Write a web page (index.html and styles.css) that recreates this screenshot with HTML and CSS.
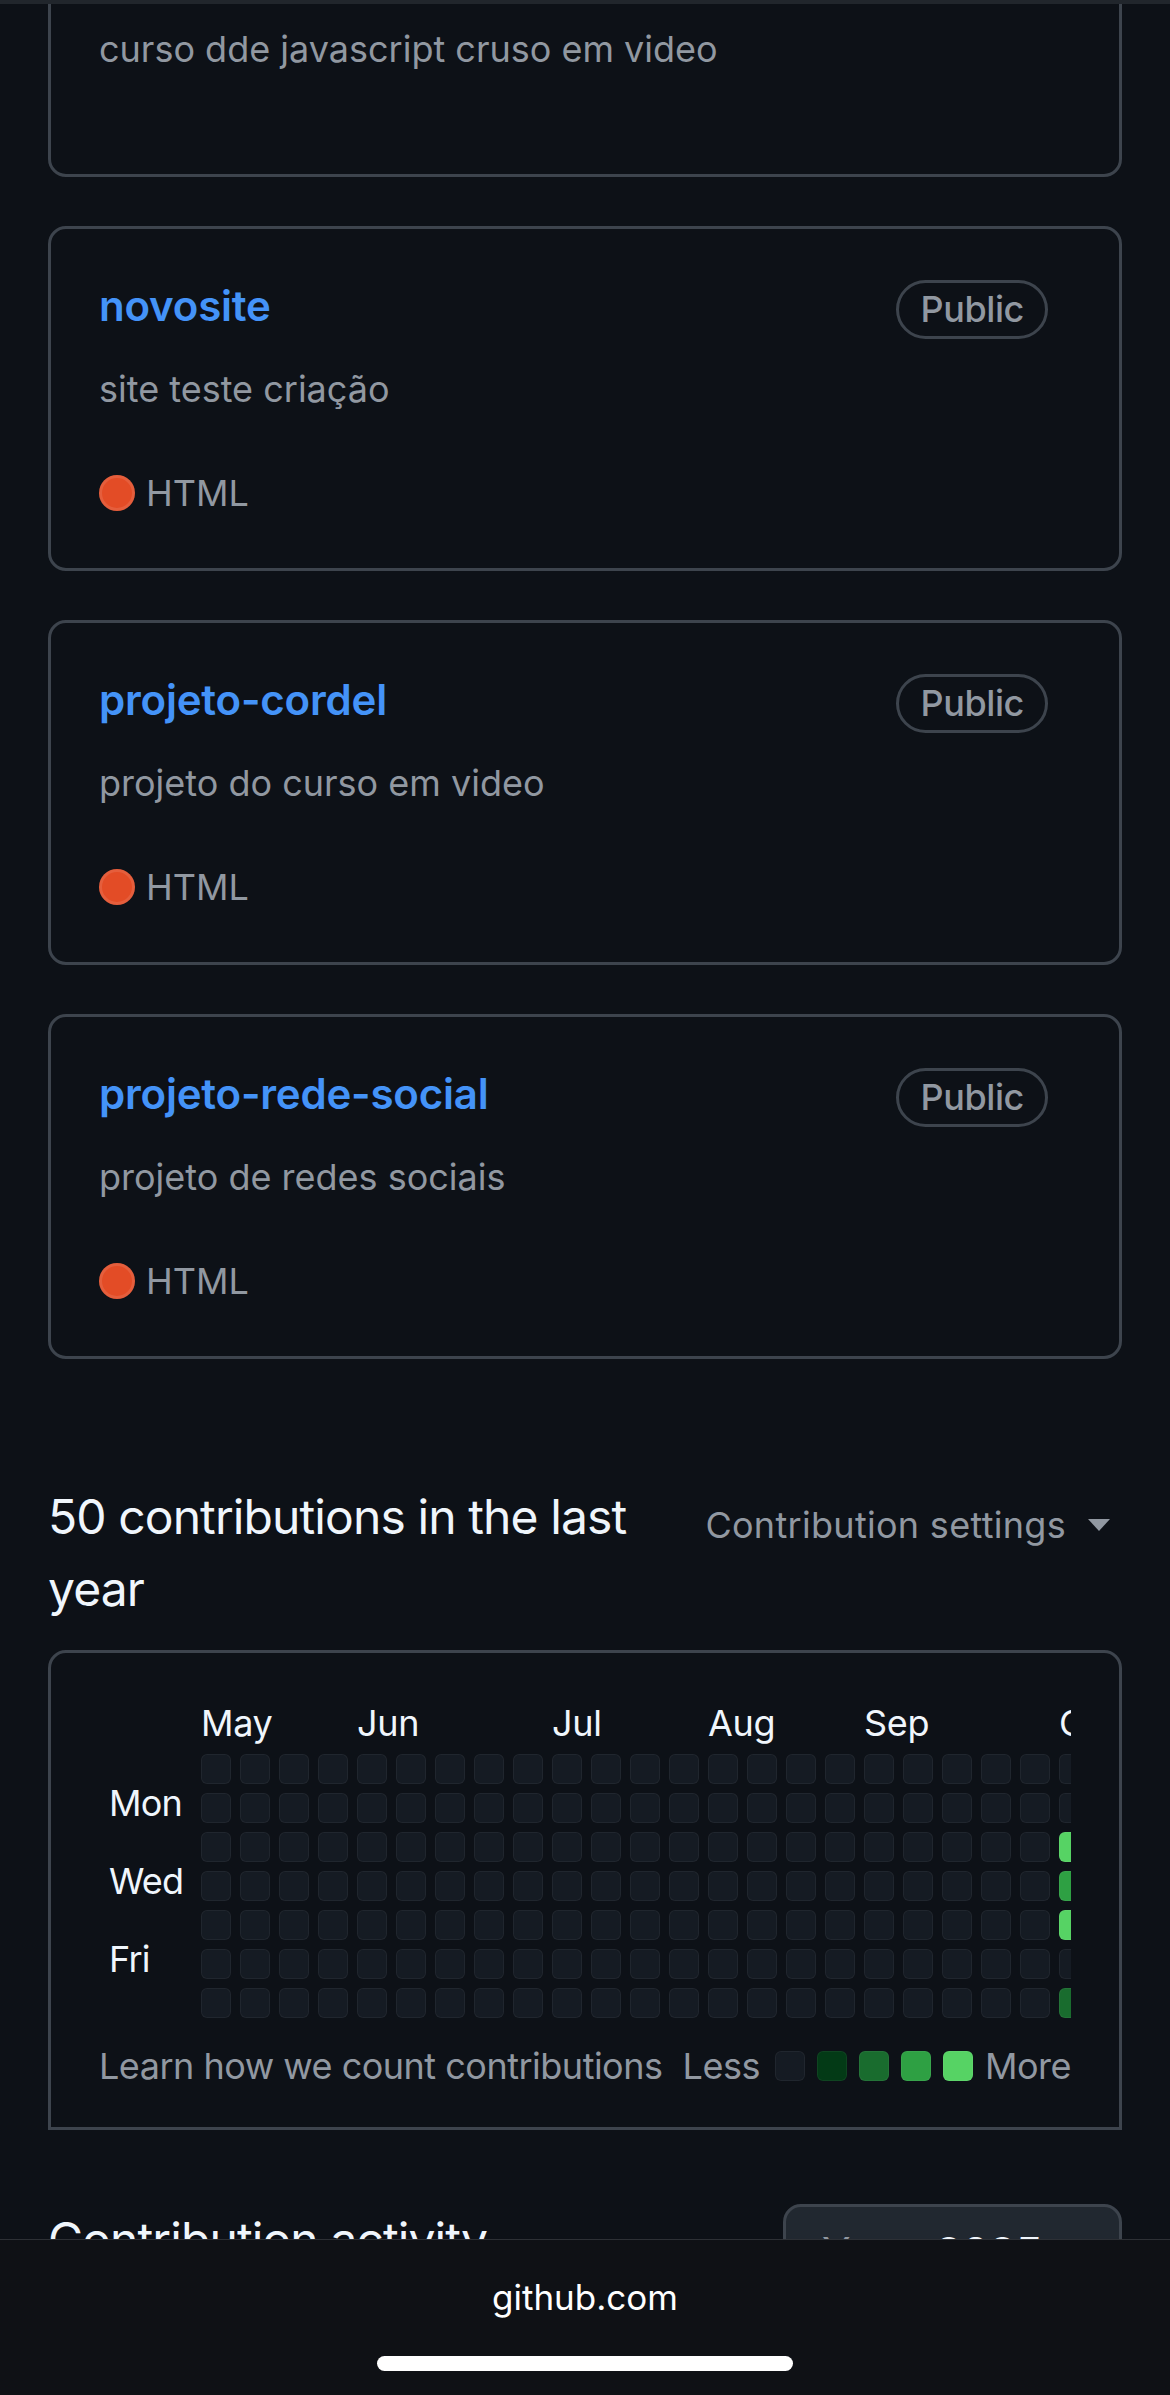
FILE: index.html
```html
<!DOCTYPE html>
<html lang="pt-BR">
<head>
<meta charset="utf-8">
<title>GitHub profile</title>
<link rel="stylesheet" href="styles.css">
</head>
<body>
<div class="chrome-top"></div>
<main class="page">
  <ol class="pinned">
    <li class="card">
      <div class="card-head"><a class="repo" href="#">curso-javascript</a><span class="label">Public</span></div>
      <p class="desc">curso dde javascript cruso em video</p>
    </li>
    <li class="card">
      <div class="card-head"><a class="repo" href="#">novosite</a><span class="label">Public</span></div>
      <p class="desc">site teste criação</p>
      <p class="lang"><span class="dot"></span>HTML</p>
    </li>
    <li class="card">
      <div class="card-head"><a class="repo" href="#">projeto-cordel</a><span class="label">Public</span></div>
      <p class="desc">projeto do curso em video</p>
      <p class="lang"><span class="dot"></span>HTML</p>
    </li>
    <li class="card">
      <div class="card-head"><a class="repo" href="#">projeto-rede-social</a><span class="label">Public</span></div>
      <p class="desc">projeto de redes sociais</p>
      <p class="lang"><span class="dot"></span>HTML</p>
    </li>
  </ol>

  <section class="contrib">
    <div class="contrib-head">
      <h2>50 contributions in the last year</h2>
      <div class="settings">Contribution settings<span class="caret"></span></div>
    </div>

    <div class="graph-box">
      <div class="graph-scroll">
        <div class="months">
          <span class="m0">May</span>
          <span class="m4">Jun</span>
          <span class="m9">Jul</span>
          <span class="m13">Aug</span>
          <span class="m17">Sep</span>
          <span class="m22">Oct</span>
        </div>
        <div class="cal-body">
          <div class="days">
            <span></span><span>Mon</span><span></span><span>Wed</span><span></span><span>Fri</span><span></span>
          </div>
          <div class="cells">
            <div class="week"><i></i><i></i><i></i><i></i><i></i><i></i><i></i></div>
            <div class="week"><i></i><i></i><i></i><i></i><i></i><i></i><i></i></div>
            <div class="week"><i></i><i></i><i></i><i></i><i></i><i></i><i></i></div>
            <div class="week"><i></i><i></i><i></i><i></i><i></i><i></i><i></i></div>
            <div class="week"><i></i><i></i><i></i><i></i><i></i><i></i><i></i></div>
            <div class="week"><i></i><i></i><i></i><i></i><i></i><i></i><i></i></div>
            <div class="week"><i></i><i></i><i></i><i></i><i></i><i></i><i></i></div>
            <div class="week"><i></i><i></i><i></i><i></i><i></i><i></i><i></i></div>
            <div class="week"><i></i><i></i><i></i><i></i><i></i><i></i><i></i></div>
            <div class="week"><i></i><i></i><i></i><i></i><i></i><i></i><i></i></div>
            <div class="week"><i></i><i></i><i></i><i></i><i></i><i></i><i></i></div>
            <div class="week"><i></i><i></i><i></i><i></i><i></i><i></i><i></i></div>
            <div class="week"><i></i><i></i><i></i><i></i><i></i><i></i><i></i></div>
            <div class="week"><i></i><i></i><i></i><i></i><i></i><i></i><i></i></div>
            <div class="week"><i></i><i></i><i></i><i></i><i></i><i></i><i></i></div>
            <div class="week"><i></i><i></i><i></i><i></i><i></i><i></i><i></i></div>
            <div class="week"><i></i><i></i><i></i><i></i><i></i><i></i><i></i></div>
            <div class="week"><i></i><i></i><i></i><i></i><i></i><i></i><i></i></div>
            <div class="week"><i></i><i></i><i></i><i></i><i></i><i></i><i></i></div>
            <div class="week"><i></i><i></i><i></i><i></i><i></i><i></i><i></i></div>
            <div class="week"><i></i><i></i><i></i><i></i><i></i><i></i><i></i></div>
            <div class="week"><i></i><i></i><i></i><i></i><i></i><i></i><i></i></div>
            <div class="week"><i></i><i></i><i class="l4"></i><i class="l3"></i><i class="l4"></i><i></i><i class="l2"></i></div>
          </div>
        </div>
      </div>
      <div class="legend">
        <span class="learn">Learn how we count contributions</span>
        <span class="scale">
          <span class="less">Less</span>
          <i></i><i class="l1"></i><i class="l2"></i><i class="l3"></i><i class="l4"></i>
          <span>More</span>
        </span>
      </div>
    </div>

    <div class="activity-head">
      <h2>Contribution activity</h2>
      <div class="year-btn"><span class="year-label">Year:</span><b>2025</b><span class="caret caret-light"></span></div>
    </div>
  </section>
</main>

<div class="safari-bar">
  <span class="url">github.com</span>
  <span class="home"></span>
</div>
</body>
</html>
```
FILE: styles.css
```css
* { box-sizing: border-box; }

html, body {
  margin: 0;
  background: #0d1117;
}

body {
  width: 1170px;
  height: 2395px;
  overflow: hidden;
  font-family: Inter, "Noto Sans", "Liberation Sans", sans-serif;
  color: #f0f6fc;
}

.chrome-top {
  position: fixed;
  top: 0;
  left: 0;
  right: 0;
  height: 4px;
  background: #21262c;
  z-index: 5;
}

.page {
  padding: 0 48px;
}

/* Pinned repositories */
.pinned {
  list-style: none;
  margin: -114px 0 0;
  padding: 0;
  display: flex;
  flex-direction: column;
  gap: 49px;
}

.card {
  border: 3px solid #3d444d;
  border-radius: 18px;
  padding: 48px;
}

.card-head {
  display: flex;
  align-items: flex-start;
  height: 63px;
}

.repo {
  flex: 1;
  font-size: 42px;
  line-height: 57px;
  font-weight: 600;
  color: #4493f8;
  text-decoration: none;
  letter-spacing: -0.2px;
}

.label {
  margin-top: 3px;
  margin-right: 23px;
  border: 3px solid #3d444d;
  border-radius: 999px;
  padding: 0 21px;
  font-size: 36px;
  line-height: 53px;
  font-weight: 500;
  color: #9198a1;
  letter-spacing: -0.4px;
}

.desc {
  margin: 22px 0 50px;
  font-size: 36px;
  line-height: 54px;
  color: #9198a1;
}

.lang {
  margin: 0;
  display: flex;
  align-items: center;
  gap: 11px;
  font-size: 36px;
  line-height: 54px;
  color: #9198a1;
}

.dot {
  width: 36px;
  height: 36px;
  border-radius: 50%;
  background: #e34c26;
  box-shadow: inset 0 0 0 3px rgba(255, 255, 255, 0.1);
}

/* Contributions */
.contrib {
  margin-top: 122px;
}

.contrib-head {
  display: flex;
  align-items: flex-start;
}

.contrib-head h2,
.activity-head h2 {
  margin: 0;
  font-size: 48px;
  line-height: 72px;
  font-weight: 400;
  color: #f0f6fc;
  letter-spacing: -0.9px;
}

.contrib-head h2 {
  flex: 1;
  padding-right: 40px;
}

.settings {
  margin-top: 17px;
  margin-right: 12px;
  display: flex;
  align-items: center;
  font-size: 36px;
  line-height: 54px;
  color: #9198a1;
  white-space: nowrap;
  letter-spacing: 0.3px;
}

.caret {
  width: 0;
  height: 0;
  margin-left: 22px;
  border-left: 11px solid transparent;
  border-right: 11px solid transparent;
  border-top: 12px solid #9198a1;
}

.graph-box {
  margin-top: 25px;
  border: 3px solid #3d444d;
  border-radius: 18px 18px 0 0;
  padding: 43px 48px 34px;
}

.graph-scroll {
  overflow: hidden;
}

.months {
  display: grid;
  grid-template-columns: repeat(23, 30px);
  column-gap: 9px;
  padding-left: 102px;
  height: 54px;
  margin-bottom: 4px;
  font-size: 36px;
  line-height: 54px;
  color: #f0f6fc;
  letter-spacing: -0.3px;
}

.months span { white-space: nowrap; }
.m0 { grid-column: 1; }
.m4 { grid-column: 5; }
.m9 { grid-column: 10; }
.m13 { grid-column: 14; }
.m17 { grid-column: 18; }
.m22 { grid-column: 23; }

.cal-body {
  display: flex;
}

.days {
  flex: none;
  width: 102px;
  padding-left: 10px;
  display: grid;
  grid-template-rows: repeat(7, 30px);
  row-gap: 9px;
  font-size: 36px;
  line-height: 20px;
  color: #f0f6fc;
  letter-spacing: -0.8px;
}

.cells {
  flex: none;
  display: flex;
  gap: 9px;
}

.week {
  flex: none;
  display: flex;
  flex-direction: column;
  gap: 9px;
}

.week i,
.scale i {
  display: block;
  width: 30px;
  height: 30px;
  border-radius: 6px;
  background: #151b23;
  box-shadow: inset 0 0 0 1px rgba(255, 255, 255, 0.05);
}

.week i.l1, .scale i.l1 { background: #033a16; }
.week i.l2, .scale i.l2 { background: #196c2e; }
.week i.l3, .scale i.l3 { background: #2ea043; }
.week i.l4, .scale i.l4 { background: #56d364; }

.legend {
  margin-top: 21px;
  display: flex;
  justify-content: space-between;
  align-items: center;
  gap: 10px;
  font-size: 36px;
  line-height: 54px;
  color: #9198a1;
  white-space: nowrap;
  letter-spacing: -0.5px;
}

.scale {
  display: flex;
  align-items: center;
  gap: 12px;
}

.less { margin-right: 3px; }

.activity-head {
  margin-top: 74px;
  display: flex;
  justify-content: space-between;
  align-items: flex-start;
}

.year-btn {
  width: 339px;
  height: 96px;
  padding: 0 36px;
  display: flex;
  align-items: center;
  gap: 12px;
  background: #212830;
  border: 3px solid #3d444d;
  border-radius: 18px;
  font-size: 42px;
  color: #9198a1;
}

.year-btn b {
  color: #f0f6fc;
  font-weight: 600;
}

.caret-light {
  margin-left: auto;
}

/* Safari bottom bar */
.safari-bar {
  position: fixed;
  left: 0;
  right: 0;
  bottom: 0;
  height: 156px;
  background: #0f1115;
  border-top: 1px solid #2d3035;
  display: flex;
  flex-direction: column;
  align-items: center;
  z-index: 5;
}

.url {
  margin-top: 40px;
  font-size: 35px;
  line-height: 35px;
  color: #ffffff;
}

.home {
  margin-top: 41px;
  width: 416px;
  height: 15px;
  border-radius: 8px;
  background: #ffffff;
}
```
